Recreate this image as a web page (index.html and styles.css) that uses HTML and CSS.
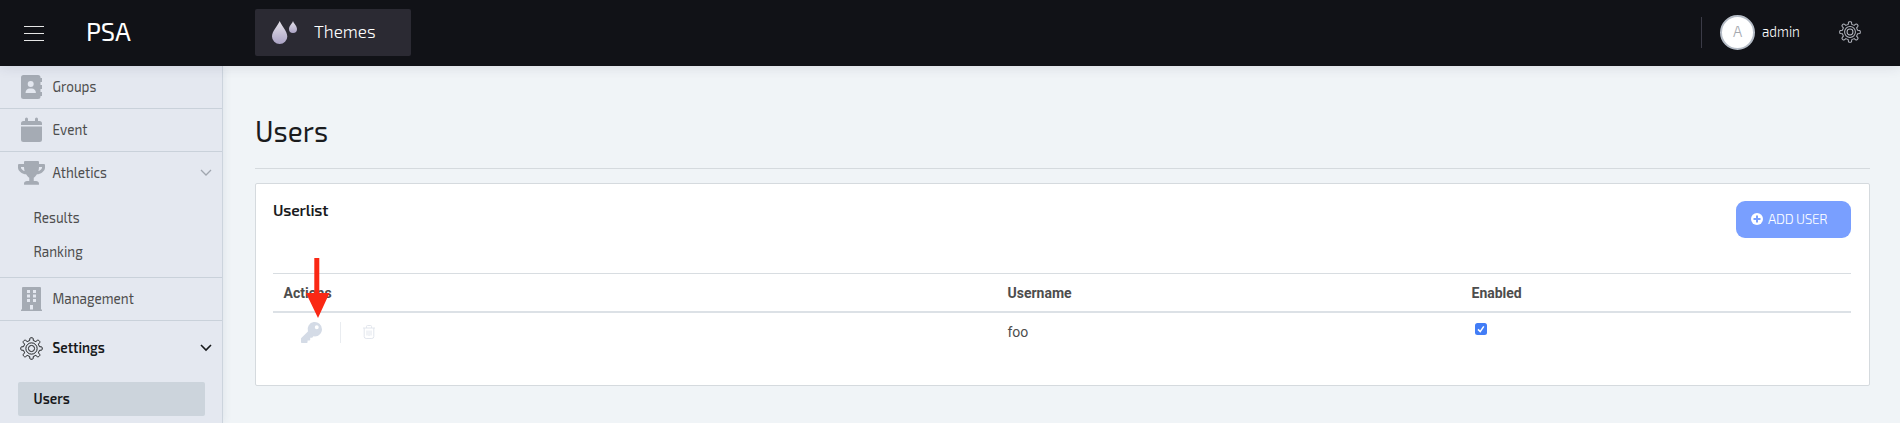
FILE: index.html
```html
<!DOCTYPE html>
<html lang="en">
<head>
<meta charset="utf-8">
<title>PSA - Users</title>
<link rel="stylesheet" href="styles.css">
</head>
<body>
<svg width="0" height="0" class="defs">
  <defs>
    <linearGradient id="drop" x1="0" y1="0" x2="0" y2="1"><stop offset="0" stop-color="#e6e3ea"/><stop offset="1" stop-color="#aaa2c4"/></linearGradient>
    <symbol id="gear" viewBox="0 0 24 24">
      <g fill="none" stroke="currentColor" stroke-linejoin="round">
        <path d="M10.1 3.7 L10.3 1.6 Q10.5 .8 11.3 .8 H12.7 Q13.5 .8 13.7 1.6 L13.9 3.7 L16.5 4.8 L18.2 3.4 Q18.9 3 19.5 3.5 L20.5 4.5 Q21 5.1 20.6 5.8 L19.2 7.5 L20.3 10.1 L22.4 10.3 Q23.2 10.5 23.2 11.3 V12.7 Q23.2 13.5 22.4 13.7 L20.3 13.9 L19.2 16.5 L20.6 18.2 Q21 18.9 20.5 19.5 L19.5 20.5 Q18.9 21 18.2 20.6 L16.5 19.2 L13.9 20.3 L13.7 22.4 Q13.5 23.2 12.7 23.2 H11.3 Q10.5 23.2 10.3 22.4 L10.1 20.3 L7.5 19.2 L5.8 20.6 Q5.1 21 4.5 20.5 L3.5 19.5 Q3 18.9 3.4 18.2 L4.8 16.5 L3.7 13.9 L1.6 13.7 Q.8 13.5 .8 12.7 V11.3 Q.8 10.5 1.6 10.3 L3.7 10.1 L4.8 7.5 L3.4 5.8 Q3 5.1 3.5 4.5 L4.5 3.5 Q5.1 3 5.8 3.4 L7.5 4.8 Z"/>
        <circle cx="12" cy="12" r="5.9"/><circle cx="12" cy="12" r="3.2"/>
      </g>
    </symbol>
  </defs>
</svg>
<header class="topbar">
  <svg class="burger" viewBox="0 0 20 16"><path d="M0 1.500h20M0 8.500h20M0 15.500h20"/></svg>
  <span class="brand">PSA</span>
  <div class="themes">
    <svg class="drops" viewBox="0 0 25 23"><path fill="url(#drop)" d="M7.700 0C9 4 15.300 10 15.300 15.500A7.600 7.500 0 0 1 0 15.500C0 10 6.400 4 7.700 0Z"/><path fill="url(#drop)" d="M21 0C21.700 2.500 25 5 25 8A4 4 0 0 1 17 8C17 5 20.300 2.500 21 0Z"/></svg>
    <span class="themes-label">Themes</span>
  </div>
  <div class="account">
    <span class="avatar">A</span>
    <span class="admin">admin</span>
    <svg class="gear-top"><use href="#gear"/></svg>
  </div>
</header>
<div class="body">
  <nav class="sidebar">
    <div class="item ruled">
      <svg class="icon" viewBox="0 0 27 24"><rect x="3" width="19.500" height="24" rx="2.500"/><path d="M21 3h3v4h-3zM21 10h3v4h-3zM21 17h3v4h-3z"/><g class="cut"><circle cx="12.700" cy="9" r="3"/><path d="M7.500 18c0-3 2-4.500 4-4.500h2.400c2 0 4 1.500 4 4.500z"/></g></svg>
      <span class="label">Groups</span>
    </div>
    <div class="item ruled">
      <svg class="icon" viewBox="0 0 27 24"><path d="M3 7V5.500A2.500 2.500 0 0 1 5.500 3H7V1a1.500 1.500 0 0 1 3 0v2h7V1a1.500 1.500 0 0 1 3 0v2h1.500A2.500 2.500 0 0 1 24 5.500V7zM3 8.500h21v13a2.500 2.500 0 0 1-2.500 2.500h-16A2.500 2.500 0 0 1 3 21.500z"/></svg>
      <span class="label">Event</span>
    </div>
    <div class="group ruled">
      <div class="item">
        <svg class="icon" viewBox="0 0 576 512" preserveAspectRatio="none"><path d="M552 64H448V24c0-13-11-24-24-24H152c-13 0-24 11-24 24v40H24C11 64 0 75 0 88v56c0 36 22 72 62 99 32 22 70 36 110 40 31 52 68 73 68 73v72h-48c-35 0-64 21-64 56v12c0 7 5 12 12 12h296c7 0 12-5 12-12v-12c0-35-29-56-64-56h-48v-72s37-21 68-73c40-4 79-18 110-40 40-27 62-63 62-99V88c0-13-11-24-24-24zM99 191c-25-17-35-36-35-47v-16h64c1 33 6 62 13 87-15-6-29-14-42-24zm413-47c0 16-18 36-35 47-13 10-27 18-42 24 7-25 12-54 13-87h64z"/></svg>
        <span class="label">Athletics</span>
        <svg class="chev" viewBox="0 0 12 8"><path d="M1 1l5 5 5-5"/></svg>
      </div>
      <div class="sub"><span class="label">Results</span></div>
      <div class="sub"><span class="label">Ranking</span></div>
    </div>
    <div class="item ruled">
      <svg class="icon" viewBox="0 0 27 24"><path d="M4 1q0-1 1-1h17q1 0 1 1v21.500h1V24H3v-1.500h1z"/><path class="cut" d="M9 3h3v3H9zM15 3h3v3h-3zM9 7.500h3v3H9zM15 7.500h3v3h-3zM9 12h3v3H9zM15 12h3v3h-3zM12 18h3v4.500h-3z"/></svg>
      <span class="label">Management</span>
    </div>
    <div class="item open">
      <svg class="icon gear-side"><use href="#gear"/></svg>
      <span class="label">Settings</span>
      <svg class="chev" viewBox="0 0 12 8"><path d="M1 1l5 5 5-5"/></svg>
    </div>
    <div class="selected"><span class="label">Users</span></div>
  </nav>
  <main class="content">
    <h1><span class="title">Users</span></h1>
    <section class="card">
      <div class="card-head">
        <h2>Userlist</h2>
        <button class="add"><svg viewBox="0 0 12 12"><circle cx="6" cy="6" r="6" fill="#fff"/><path d="M6 2.500v7M2.500 6h7" stroke="#799fff" stroke-width="2"/></svg><span>ADD USER</span></button>
      </div>
      <div class="row head"><b>Actions</b><b>Username</b><b>Enabled</b></div>
      <div class="row">
        <div class="actions">
          <svg class="key" viewBox="0 0 512 512"><path d="M512 176c0 97-79 176-176 176-11 0-22-1-33-3l-24 27a24 24 0 0 1-18 8h-37v40c0 13-11 24-24 24h-40v40c0 13-11 24-24 24H24c-13 0-24-11-24-24v-78c0-6 3-12 7-17l162-162A176 176 0 1 1 512 176zM336 128a48 48 0 1 0 96 0 48 48 0 1 0-96 0z"/></svg>
          <i class="sep"></i>
          <svg class="trash" viewBox="0 0 12 14"><path d="M0 3h12M3.500 3V1.500q0-1 1-1h3q1 0 1 1V3M1.200 3v8.500q0 2 2 2h5.600q2 0 2-2V3M4 5.500v5M6 5.500v5.500M8 5.500v5"/></svg>
        </div>
        <span class="cell">foo</span>
        <span class="check"><svg viewBox="0 0 12 12"><rect width="12" height="12" rx="2.500" fill="#427df6"/><path d="M3 6.400l2.200 2.200L8.800 3.300" fill="none" stroke="#fff" stroke-width="1.500"/></svg></span>
      </div>
    </section>
  </main>
</div>
<svg class="arrow" viewBox="0 0 24 60"><path d="M8.300 0h5v35H23.500L12 60 0 35H8.300z"/></svg>
</body>
</html>
```
FILE: styles.css
```css
* { box-sizing: border-box; }
body { margin: 0; height: 423px; overflow: hidden; background: #f0f4f7; color: #4d4d4d; font-family: "Exo 2", Roboto, sans-serif; font-size: 15px; }
span, b { white-space: nowrap; }
svg { display: block; flex: none; overflow: visible; }
.defs { position: absolute; }
.topbar { height: 66px; background: #111217; display: flex; align-items: center; padding: 0 0 1px 24px; color: #fff; position: relative; z-index: 2; box-shadow: 0 1px 12px rgba(40, 40, 80, .12); }
.burger { width: 20px; height: 16px; stroke: #e6e6e6; stroke-width: 1; }
.brand { width: 169px; margin-left: 42px; font-size: 25.5px; line-height: 30px; padding-bottom: 4px; letter-spacing: -.2px; }
.themes { width: 156px; height: 47px; border-radius: 2px; background: #2b2a33; display: flex; align-items: center; padding-left: 17px; }
.drops { width: 25px; height: 23px; }
.themes-label { margin-left: 17px; font-size: 18px; font-weight: 350; padding-bottom: 3px; transform: scaleX(.95); transform-origin: 0 50%; }
.account { margin-left: auto; width: 199px; height: 31px; border-left: 1px solid #3b3b47; display: flex; align-items: center; padding-left: 18px; }
.avatar { width: 35px; height: 35px; border-radius: 50%; background: #fff; border: 2px solid #b5bcc6; color: #a6a9b0; text-align: center; line-height: 29px; font-size: 15px; font-weight: 300; flex: none; }
.admin { width: 81px; margin-left: 7px; padding-bottom: 3px; font-size: 15px; font-weight: 350; transform: scaleX(.9); transform-origin: 0 50%; }
.gear-top { width: 22px; height: 22px; color: #b4b7c0; stroke-width: 1.1; margin: -1px 0 0 -4px; }
.body { display: flex; height: 357px; }
.sidebar { width: 223px; background: #e4e8f0; border-right: 1px solid #ccd4dd; box-shadow: 1px 0 8px rgba(60, 80, 110, .09); }
.label { display: inline-block; transform: translate(.5px, -1px) scaleX(.9); transform-origin: 0 50%; }
.item { height: 42px; display: flex; align-items: center; padding: 0 10px 0 18px; }
.ruled { border-bottom: 1px solid #c9d1da; }
.item.ruled { height: 43px; }
.icon { width: 27px; height: 24px; fill: #a5abb4; margin-right: 7px; }
.cut { fill: #e4e8f0; }
.chev { width: 12px; height: 8px; margin-left: auto; fill: none; stroke: #a0a6af; stroke-width: 1.3; }
.group { height: 126px; }
.sub { height: 34px; padding-left: 33px; line-height: 34px; }
.group .item { height: 42px; margin-bottom: 7px; }
.item.open { height: 53px; color: #17191b; font-weight: 600; }
.gear-side { height: 23px; width: 23px; margin: 2px 9px 0 2px; }
.open .chev { stroke: #17191b; stroke-width: 1.6; }
.selected { width: 187px; height: 34px; margin: 8px 0 0 18px; padding-left: 15px; background: #ccd4dc; border-radius: 2px; line-height: 34px; color: #17191b; font-weight: 600; }
.content { flex: 1; padding: 0 30px 0 32px; }
h1 { margin: 0; height: 103px; padding-top: 44px; border-bottom: 1px solid #d5dade; font-size: 30px; line-height: 40px; font-weight: 400; color: #1a1b1d; }
.title { display: inline-block; transform: scaleX(.93); transform-origin: 0 50%; }
h2 { margin: -1px 0 0; font-size: 15.5px; line-height: 20px; font-weight: 600; color: #1a1b1d; letter-spacing: -.2px; }
.card { margin-top: 14px; height: 203px; border: 1px solid #d5dade; border-radius: 2px; background: #fff; padding: 17px 18px 0 17px; }
.card-head { height: 72px; display: flex; justify-content: space-between; align-items: flex-start; }
.add { width: 115px; height: 37px; border: 0; border-radius: 9px; background: #799fff; color: #fff; padding: 0 0 2px 15px; display: flex; align-items: center; gap: 5px; font: 350 13.5px "Exo 2", Roboto, sans-serif; letter-spacing: -.3px; }
.add svg { width: 12px; height: 12px; }
.row { display: grid; grid-template-columns: 724px 464px 1fr; padding-left: 10.5px; font-family: Roboto, sans-serif; font-size: 14px; }
.head { height: 40px; border-top: 1px solid #d8dde1; border-bottom: 2px solid #dce1e6; line-height: 38px; }
.head b { font-weight: 700; }
.actions { display: flex; align-items: center; height: 38px; padding-left: 17.5px; }
.key { width: 21px; height: 21px; fill: #d4dbe6; }
.sep { width: 1px; height: 21px; background: #e9ecf0; margin: 0 22px 0 18px; }
.trash { width: 12px; height: 14px; margin-top: -1px; fill: none; stroke: #e2e6ed; stroke-width: 1; }
.cell { line-height: 38px; }
.check { padding: 10px 0 0 3.5px; }
.check svg { width: 12px; height: 12px; }
.arrow { position: absolute; left: 306px; top: 258px; width: 24px; height: 60px; fill: #fa2814; z-index: 3; }
```
